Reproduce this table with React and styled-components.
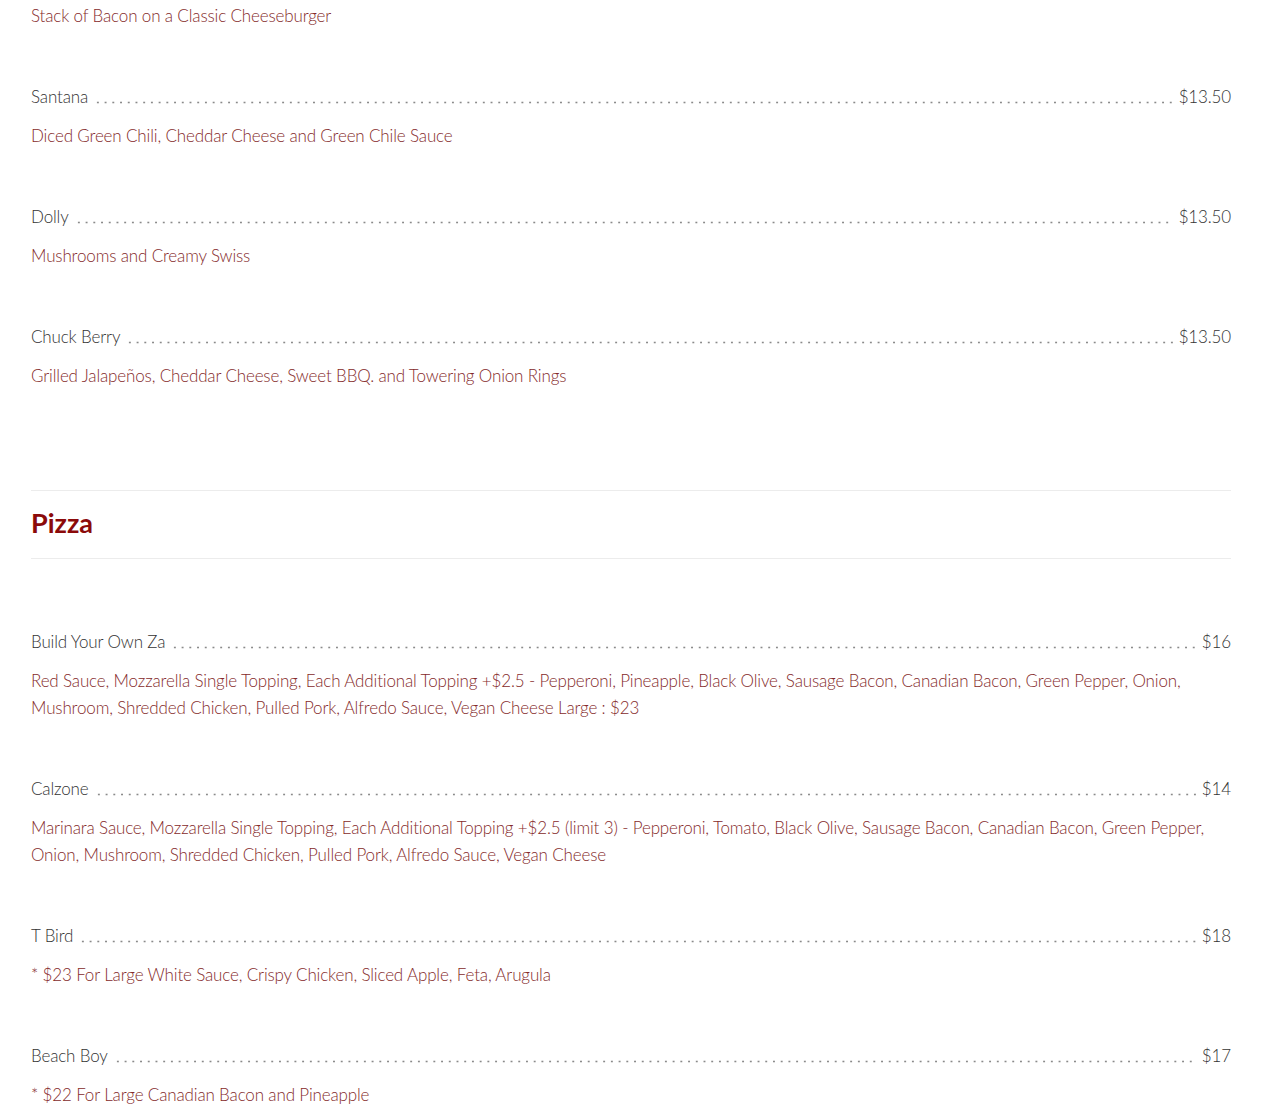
import React from 'react'
import styled, { createGlobalStyle } from 'styled-components'

const burgers = [
  { name: 'Santana', price: '$13.50', desc: 'Diced Green Chili, Cheddar Cheese and Green Chile Sauce' },
  { name: 'Dolly', price: '$13.50', desc: 'Mushrooms and Creamy Swiss' },
  { name: 'Chuck Berry', price: '$13.50', desc: 'Grilled Jalapeños, Cheddar Cheese, Sweet BBQ. and Towering Onion Rings' },
]

const pizzas = [
  {
    name: 'Build Your Own Za',
    price: '$16',
    desc: 'Red Sauce, Mozzarella Single Topping, Each Additional Topping +$2.5 - Pepperoni, Pineapple, Black Olive, Sausage Bacon, Canadian Bacon, Green Pepper, Onion, Mushroom, Shredded Chicken, Pulled Pork, Alfredo Sauce, Vegan Cheese Large : $23',
  },
  {
    name: 'Calzone',
    price: '$14',
    desc: 'Marinara Sauce, Mozzarella Single Topping, Each Additional Topping +$2.5 (limit 3) - Pepperoni, Tomato, Black Olive, Sausage Bacon, Canadian Bacon, Green Pepper, Onion, Mushroom, Shredded Chicken, Pulled Pork, Alfredo Sauce, Vegan Cheese',
  },
  { name: 'T Bird', price: '$18', desc: '* $23 For Large White Sauce, Crispy Chicken, Sliced Apple, Feta, Arugula' },
  { name: 'Beach Boy', price: '$17', desc: '* $22 For Large Canadian Bacon and Pineapple' },
]

const MenuItem = ({ name, price, desc }) => (
  <Item>
    <NameRow>
      <Name>{name}</Name>
      <Leader />
      <Price>{price}</Price>
    </NameRow>
    <Desc>{desc}</Desc>
  </Item>
)

const App = () => {
  return (
    <>
      <GlobalStyle />
      <Page>
        <Item>
          <Desc>Stack of Bacon on a Classic Cheeseburger</Desc>
        </Item>
        {burgers.map((b) => (
          <MenuItem key={b.name} {...b} />
        ))}
        <Section>
          <SectionHeader>
            <h2>Pizza</h2>
          </SectionHeader>
          <Items>
            {pizzas.map((p) => (
              <MenuItem key={p.name} {...p} />
            ))}
          </Items>
        </Section>
      </Page>
    </>
  )
}

const GlobalStyle = createGlobalStyle`
  body {
    margin: 0;
    background: #fff;
    font-family: Lato, 'Open Sans', sans-serif;
    font-weight: 300;
  }
`

const Page = styled.main`
  width: 1200px;
  padding: 2px 31px 0;
  overflow: hidden;
`

const Item = styled.div`
  margin-bottom: 54px;
`

const NameRow = styled.div`
  display: flex;
  align-items: flex-end;
  font-size: 17px;
  letter-spacing: -0.15px;
  line-height: 27px;
  color: #333;
  margin-bottom: 12px;
`

const Name = styled.span`
  white-space: nowrap;
  padding-right: 6px;
`

const Leader = styled.span`
  flex: 1;
  height: 27px;
  margin-right: 6px;
  background-image: radial-gradient(circle, #8a8a8a 0.75px, transparent 1.25px);
  background-size: 7.72px 3px;
  background-repeat: repeat-x;
  background-position: left 0 bottom 6px;
`

const Price = styled.span`
  white-space: nowrap;
`

const Desc = styled.p`
  margin: 0;
  font-size: 17px;
  letter-spacing: -0.15px;
  line-height: 27px;
  color: #852b2b;
`

const Section = styled.section`
  margin-top: 101px;
`

const SectionHeader = styled.div`
  border-top: 1px solid #ececec;
  border-bottom: 1px solid #ececec;
  height: 69px;
  padding-bottom: 5px;
  box-sizing: border-box;
  display: flex;
  align-items: center;
  h2 {
    margin: 0;
    font-family: Lato, sans-serif;
    font-weight: 700;
    font-size: 27px;
    color: #8b0a0a;
  }
`

const Items = styled.div`
  padding-top: 69px;
`

export default App
